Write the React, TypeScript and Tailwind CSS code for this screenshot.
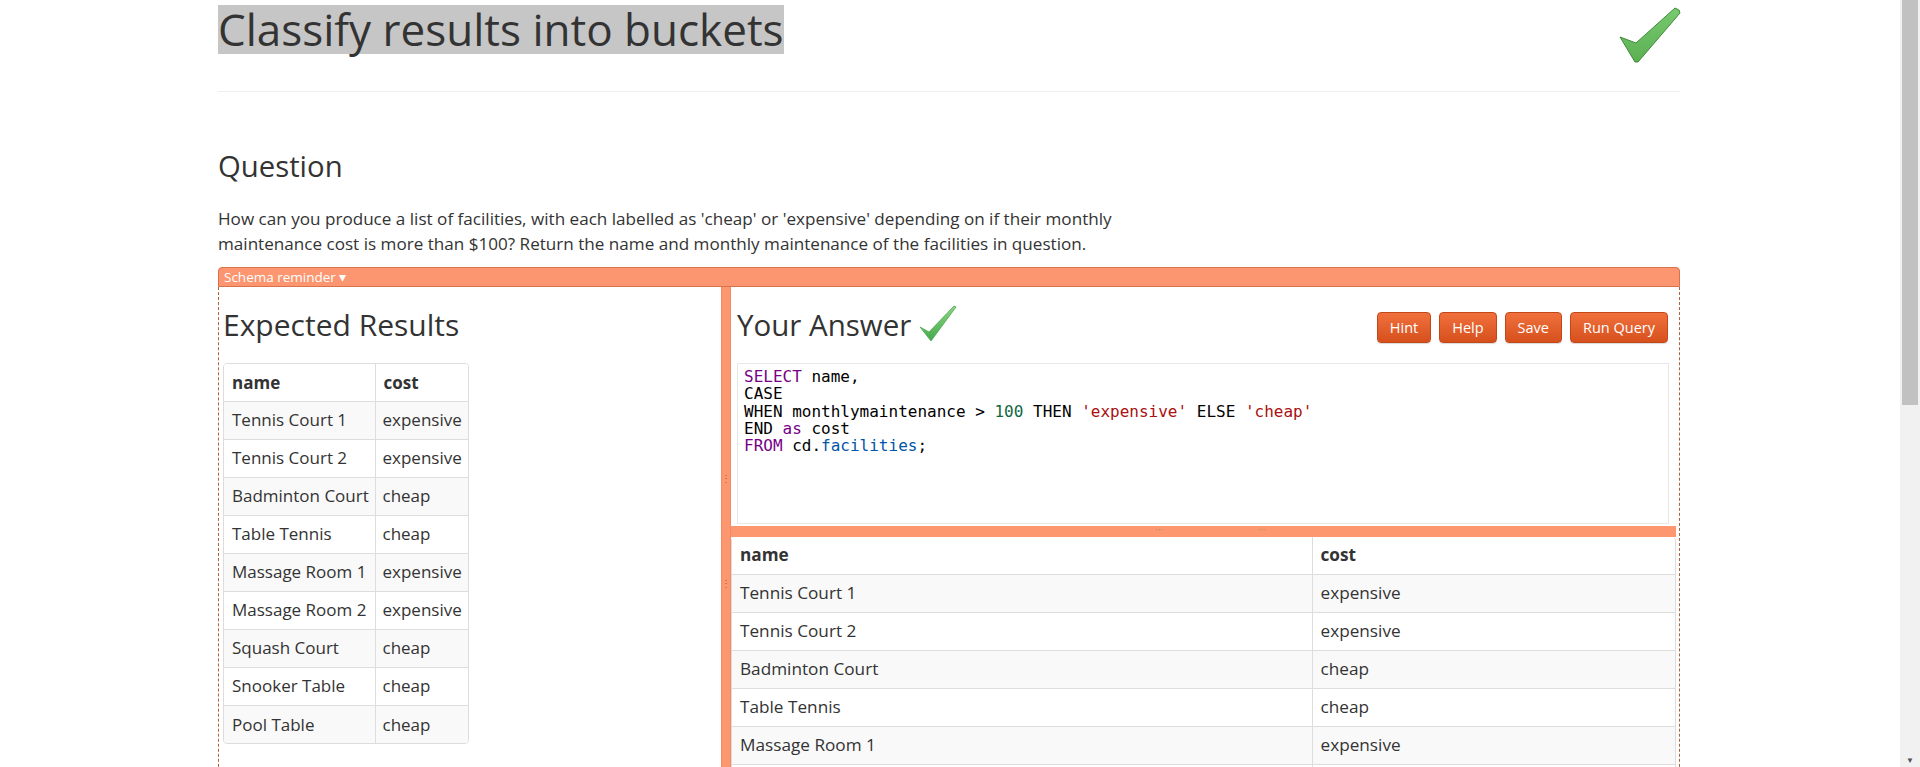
import React from "react";

const rows = [
  ["Tennis Court 1", "expensive"],
  ["Tennis Court 2", "expensive"],
  ["Badminton Court", "cheap"],
  ["Table Tennis", "cheap"],
  ["Massage Room 1", "expensive"],
  ["Massage Room 2", "expensive"],
  ["Squash Court", "cheap"],
  ["Snooker Table", "cheap"],
  ["Pool Table", "cheap"],
];

function BigCheck() {
  return (
    <svg width="62" height="58" viewBox="0 0 62 58" className="mt-[6px] mr-[-1px]">
      <defs>
        <linearGradient id="bigck" x1="0" y1="0" x2="0" y2="1">
          <stop offset="0" stopColor="#78c96f" />
          <stop offset="1" stopColor="#5cb052" />
        </linearGradient>
      </defs>
      <polygon
        points="1,31 17,37 56,2 60,4 61,7 19,56 16,56"
        fill="url(#bigck)"
        stroke="#3f8c3a"
        strokeWidth="1"
        strokeLinejoin="round"
      />
    </svg>
  );
}

function SmallCheck() {
  return (
    <svg width="37" height="37" viewBox="0 0 37 37" className="ml-[9px] mt-[-3px]">
      <defs>
        <linearGradient id="smck" x1="0" y1="0" x2="0" y2="1">
          <stop offset="0" stopColor="#8bd67f" />
          <stop offset="1" stopColor="#45a84c" />
        </linearGradient>
      </defs>
      <polygon
        points="0,22 9,27 34,1 36,2 11,36"
        fill="url(#smck)"
        stroke="#4ea653"
        strokeWidth="0.8"
        strokeLinejoin="round"
      />
    </svg>
  );
}

function Btn({ label }: { label: string }) {
  return (
    <button className="h-[31px] rounded-[4px] border border-[#c4471a] bg-gradient-to-b from-[#f0703c] to-[#d6501c] px-[12px] text-[14.5px] leading-[29px] text-white shadow-[0_1px_1px_rgba(0,0,0,0.15)]">
      {label}
    </button>
  );
}

export default function App() {
  return (
    <div className="flex h-[767px] overflow-hidden bg-white font-['Open_Sans','Liberation_Sans',sans-serif] text-[#333]">
      <div className="flex-1 overflow-hidden">
        <div className="ml-[218px] w-[1462px]">
          {/* page header */}
          <div className="flex h-[92px] items-start justify-between border-b border-[#eeeeee]">
            <h1 className="mt-[5px] text-[44px] leading-[49px]">
              <span className="inline-block h-[49px] bg-[#c6c6c6]">Classify results into buckets</span>
            </h1>
            <BigCheck />
          </div>

          <h2 className="mt-[58px] text-[29.3px] leading-[33px]">Question</h2>
          <p className="mt-[23px] text-[17.1px] leading-[25px]">
            How can you produce a list of facilities, with each labelled as 'cheap' or 'expensive' depending on if their monthly
            <br />
            maintenance cost is more than $100? Return the name and monthly maintenance of the facilities in question.
          </p>

          {/* schema bar */}
          <div className="mt-[11px] h-[20px] rounded-t-[4px] border border-[#d9714b] bg-[#fb9670] px-[5px] text-[13.5px] leading-[18px] text-white">
            Schema reminder ▾
          </div>

          <div className="flex h-[520px] border-x border-dashed border-[#b2603c]">
            {/* expected results */}
            <div className="w-[502px] shrink-0 pl-[4px]">
              <h2 className="mt-[21px] text-[30px] leading-[33px]">Expected Results</h2>
              <div className="mt-[22px] w-[246px] overflow-hidden rounded-[4px] border border-[#dddddd]">
                <table className="w-full table-fixed border-collapse text-[17px] text-[#333]">
                  <thead>
                    <tr className="h-[37px] bg-white">
                      <th className="w-[151px] px-[8px] text-left font-bold">name</th>
                      <th className="border-l border-[#dddddd] px-[8px] text-left font-bold">cost</th>
                    </tr>
                  </thead>
                  <tbody>
                    {rows.map((r, i) => (
                      <tr key={r[0]} className={"h-[38px] border-t border-[#dddddd] " + (i % 2 === 0 ? "bg-[#f9f9f9]" : "bg-white")}>
                        <td className="whitespace-nowrap pl-[8px]">{r[0]}</td>
                        <td className="whitespace-nowrap border-l border-[#dddddd] pl-[7px]">{r[1]}</td>
                      </tr>
                    ))}
                  </tbody>
                </table>
              </div>
            </div>

            {/* vertical splitter */}
            <div className="flex w-[10px] shrink-0 flex-col items-center border-x border-[#f28a63] bg-[#fc976f]">
              <span className="mt-[186px] text-[10px] leading-[10px] text-[#a8634a]">⋮</span>
              <span className="mt-[95px] text-[10px] leading-[10px] text-[#a8634a]">⋮</span>
            </div>

            {/* your answer */}
            <div className="flex-1">
              <div className="pl-[6px] pr-[10px]">
                <div className="flex h-[54px] items-end justify-between">
                  <h2 className="flex h-[33px] items-center text-[29.5px] leading-[33px]">
                    Your Answer
                    <SmallCheck />
                  </h2>
                  <div className="mb-[-2px] flex gap-[8px] pr-[1px]">
                    <Btn label="Hint" />
                    <Btn label="Help" />
                    <Btn label="Save" />
                    <Btn label="Run Query" />
                  </div>
                </div>
                <div className="mt-[22px] h-[161px] border border-[#e8e8e8] bg-white pl-[6px] pt-[4px] font-['DejaVu_Sans_Mono',monospace] text-[16px] leading-[17.3px] text-black">
                  <div>
                    <span className="text-[#770088]">SELECT</span> name,
                  </div>
                  <div>CASE</div>
                  <div>
                    WHEN monthlymaintenance &gt; <span className="text-[#116644]">100</span> THEN{" "}
                    <span className="text-[#aa1111]">'expensive'</span> ELSE{" "}
                    <span className="text-[#aa1111]">'cheap'</span>
                  </div>
                  <div>
                    END <span className="text-[#770088]">as</span> cost
                  </div>
                  <div>
                    <span className="text-[#770088]">FROM</span> cd.<span className="text-[#0055aa]">facilities</span>;
                  </div>
                </div>
              </div>

              {/* horizontal splitter */}
              <div className="mt-[2px] mr-[3px] flex h-[11px] bg-[#fc976f] text-[10px] leading-[6px] text-[#c98a72]">
                <span className="ml-[424px]">···</span>
                <span className="ml-[95px]">···</span>
              </div>

              <div className="mr-[3px] overflow-hidden rounded-t-[4px] border-x border-[#dddddd]">
                <table className="w-full border-collapse text-[17.2px] text-[#333]">
                  <thead>
                    <tr className="h-[37px] bg-white">
                      <th className="w-[580px] px-[8px] text-left font-bold">name</th>
                      <th className="border-l border-[#dddddd] px-[8px] text-left font-bold">cost</th>
                    </tr>
                  </thead>
                  <tbody>
                    {rows.map((r, i) => (
                      <tr key={r[0]} className={"h-[38px] border-t border-[#dddddd] " + (i % 2 === 0 ? "bg-[#f9f9f9]" : "bg-white")}>
                        <td className="px-[8px]">{r[0]}</td>
                        <td className="border-l border-[#dddddd] px-[8px]">{r[1]}</td>
                      </tr>
                    ))}
                  </tbody>
                </table>
              </div>
            </div>
          </div>
        </div>
      </div>

      {/* page scrollbar */}
      <div className="flex w-[20px] shrink-0 flex-col bg-[#f1f1f1]">
        <div className="mx-[2px] h-[405px] bg-[#c1c1c1]" />
        <div className="flex-1" />
        <div className="mb-[3px] flex justify-center text-[8px] leading-[8px] text-[#505050]">▼</div>
      </div>
    </div>
  );
}
